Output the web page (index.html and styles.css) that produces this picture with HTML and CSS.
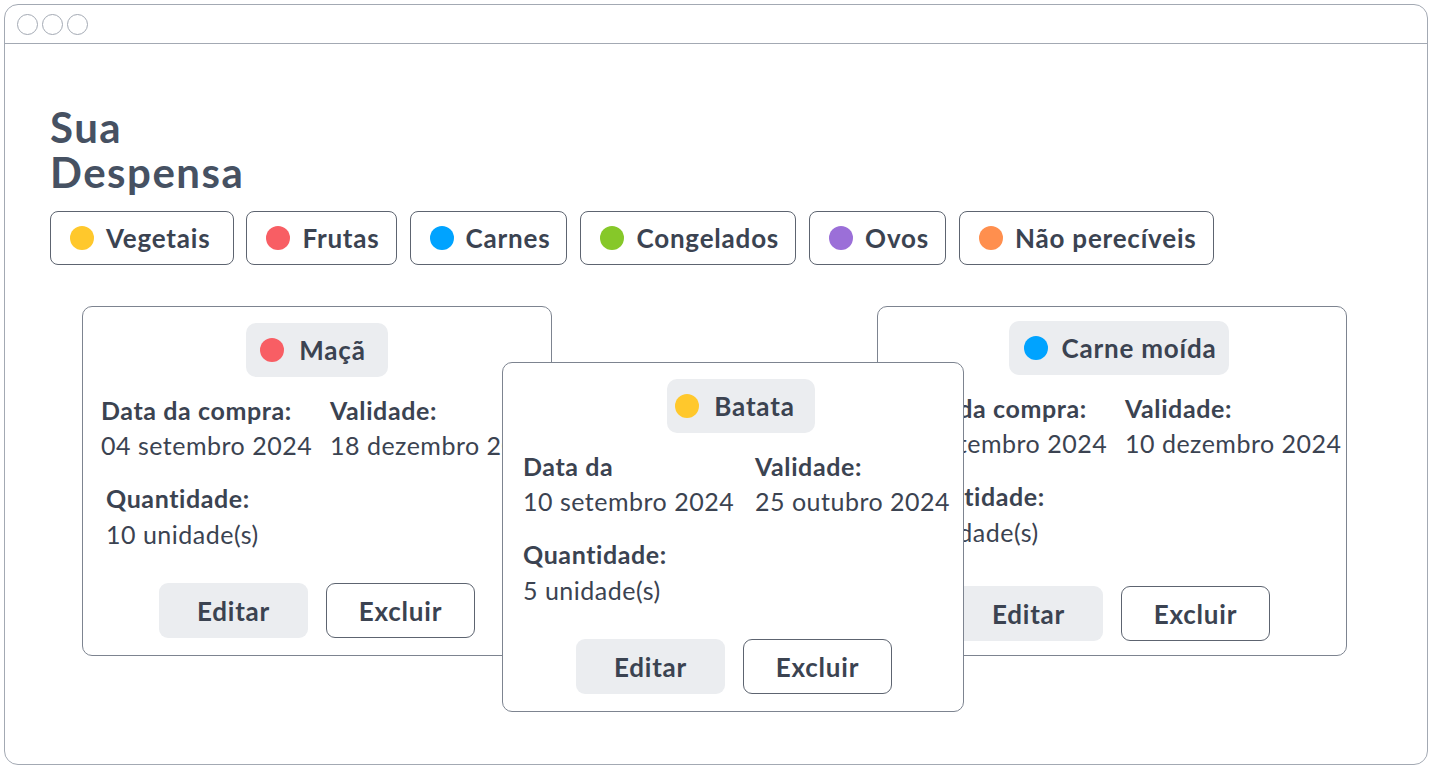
FILE: index.html
```html
<!DOCTYPE html>
<html lang="pt">
<head>
<meta charset="utf-8">
<title>Sua Despensa</title>
<link rel="stylesheet" href="styles.css">
</head>
<body>
<div class="frame">
  <div class="topbar">
    <span class="light"></span><span class="light"></span><span class="light"></span>
  </div>
  <main class="main">
    <h1 class="title">Sua<br>Despensa</h1>
    <div class="chips">
      <div class="chip chip-first"><span class="dot yellow"></span>Vegetais</div>
      <div class="chip"><span class="dot red"></span>Frutas</div>
      <div class="chip"><span class="dot blue"></span>Carnes</div>
      <div class="chip"><span class="dot green"></span>Congelados</div>
      <div class="chip"><span class="dot purple"></span>Ovos</div>
      <div class="chip"><span class="dot orange"></span>Não perecíveis</div>
    </div>
    <div class="cards">
      <section class="card">
        <div class="pill"><span class="dot red"></span>Maçã</div>
        <div class="info">
          <div class="field">
            <div class="label">Data da compra:</div>
            <div class="value">04 setembro 2024</div>
          </div>
          <div class="field">
            <div class="label">Validade:</div>
            <div class="value">18 dezembro 2024</div>
          </div>
          <div class="field qty indent">
            <div class="label">Quantidade:</div>
            <div class="value">10 unidade(s)</div>
          </div>
        </div>
        <div class="actions">
          <button class="btn edit">Editar</button>
          <button class="btn del">Excluir</button>
        </div>
      </section>
      <section class="card card-right">
        <div class="pill"><span class="dot blue"></span>Carne moída</div>
        <div class="info">
          <div class="field">
            <div class="label">Data da compra:</div>
            <div class="value">02 setembro 2024</div>
          </div>
          <div class="field">
            <div class="label">Validade:</div>
            <div class="value">10 dezembro 2024</div>
          </div>
          <div class="field qty indent">
            <div class="label">Quantidade:</div>
            <div class="value">2 unidade(s)</div>
          </div>
        </div>
        <div class="actions">
          <button class="btn edit">Editar</button>
          <button class="btn del">Excluir</button>
        </div>
      </section>
      <section class="card card-front">
        <div class="pill"><span class="dot yellow"></span>Batata</div>
        <div class="info wide">
          <div class="field">
            <div class="label">Data da</div>
            <div class="value">10 setembro 2024</div>
          </div>
          <div class="field">
            <div class="label">Validade:</div>
            <div class="value">25 outubro 2024</div>
          </div>
          <div class="field qty">
            <div class="label">Quantidade:</div>
            <div class="value">5 unidade(s)</div>
          </div>
        </div>
        <div class="actions">
          <button class="btn edit">Editar</button>
          <button class="btn del">Excluir</button>
        </div>
      </section>
    </div>
  </main>
</div>
</body>
</html>
```
FILE: styles.css
```css
* { box-sizing: border-box; }
html, body { margin: 0; padding: 0; background: #fff; }
body {
  font-family: Lato, "Noto Sans", sans-serif;
  color: #3b4351;
  width: 1432px;
  height: 769px;
  overflow: hidden;
}
.frame {
  margin: 4px 0 0 4px;
  width: 1424px;
  height: 761px;
  border: 1.5px solid #a3a9b3;
  border-radius: 14px;
  overflow: hidden;
}
.topbar {
  height: 39px;
  border-bottom: 1.5px solid #a3a9b3;
  display: flex;
  align-items: center;
  gap: 4px;
  padding-left: 12px;
}
.light {
  width: 21px;
  height: 21px;
  border: 1.5px solid #a3a9b3;
  border-radius: 50%;
}
.main { padding: 61px 0 0 45px; }
.title {
  margin: 0;
  font-size: 42px;
  line-height: 45px;
  letter-spacing: 1.5px;
  font-weight: 700;
  color: #465162;
}
.chips {
  display: flex;
  gap: 13px;
  margin-top: 16px;
}
.chip {
  height: 54px;
  display: flex;
  align-items: center;
  gap: 12px;
  padding: 0 16px 0 19px;
  border: 1.3px solid #5d6470;
  border-radius: 8px;
  font-size: 26px;
  letter-spacing: 0.8px;
  font-weight: 700;
}
.chip-first { padding-right: 23px; margin-right: -1px; }
.dot {
  width: 24px;
  height: 24px;
  border-radius: 50%;
  flex: none;
}
.yellow { background: #ffc82c; }
.red { background: #f85e64; }
.blue { background: #00a3ff; }
.green { background: #86c829; }
.purple { background: #9b6fd8; }
.orange { background: #ff8f4e; }

.cards {
  position: relative;
  display: flex;
  justify-content: space-between;
  width: 1265px;
  margin: 41px 0 0 32px;
}
.card {
  width: 470px;
  height: 350px;
  background: #fff;
  border: 1.2px solid #7d8490;
  border-radius: 10px;
  padding: 16px 18px 0 18px;
  display: flex;
  flex-direction: column;
}
.card-front {
  position: absolute;
  left: 420px;
  top: 56px;
  width: 462px;
  padding-left: 20px;
}
.pill {
  align-self: center;
  height: 54px;
  display: flex;
  align-items: center;
  gap: 15px;
  padding: 0 22px 0 14px;
  background: #ebedf0;
  border-radius: 10px;
  font-size: 26px;
  letter-spacing: 0.8px;
  font-weight: 700;
}
.card-front .pill { padding: 0 20px 0 8px; margin-left: 14px; }
.card-right .pill { margin-top: -2px; padding: 0 12px 0 15px; gap: 13px; margin-left: 14px; }
.info {
  margin-top: 16px;
  display: grid;
  grid-template-columns: 211px auto;
  column-gap: 18px;
  font-size: 25px;
  line-height: 35px;
  white-space: nowrap;
}
.info.wide { column-gap: 21px; }
.label { font-weight: 700; letter-spacing: 0.6px; }
.value { font-weight: 400; letter-spacing: 0.5px; }
.qty { grid-column: 1 / 3; margin-top: 18px; }
.qty .value { line-height: 37px; }
.indent { padding-left: 5px; }
.actions {
  margin-top: 30px;
  display: flex;
  justify-content: center;
  gap: 18px;
}
.card-right .actions { margin-top: 35px; }
.btn {
  height: 55px;
  width: 149px;
  font-family: Lato, "Noto Sans", sans-serif;
  font-size: 26px;
  letter-spacing: 0.8px;
  font-weight: 700;
  color: #3b4351;
  border-radius: 9px;
  cursor: pointer;
}
.edit { background: #ebedf0; border: none; }
.del { background: #fff; border: 1.3px solid #5d6470; }
```
